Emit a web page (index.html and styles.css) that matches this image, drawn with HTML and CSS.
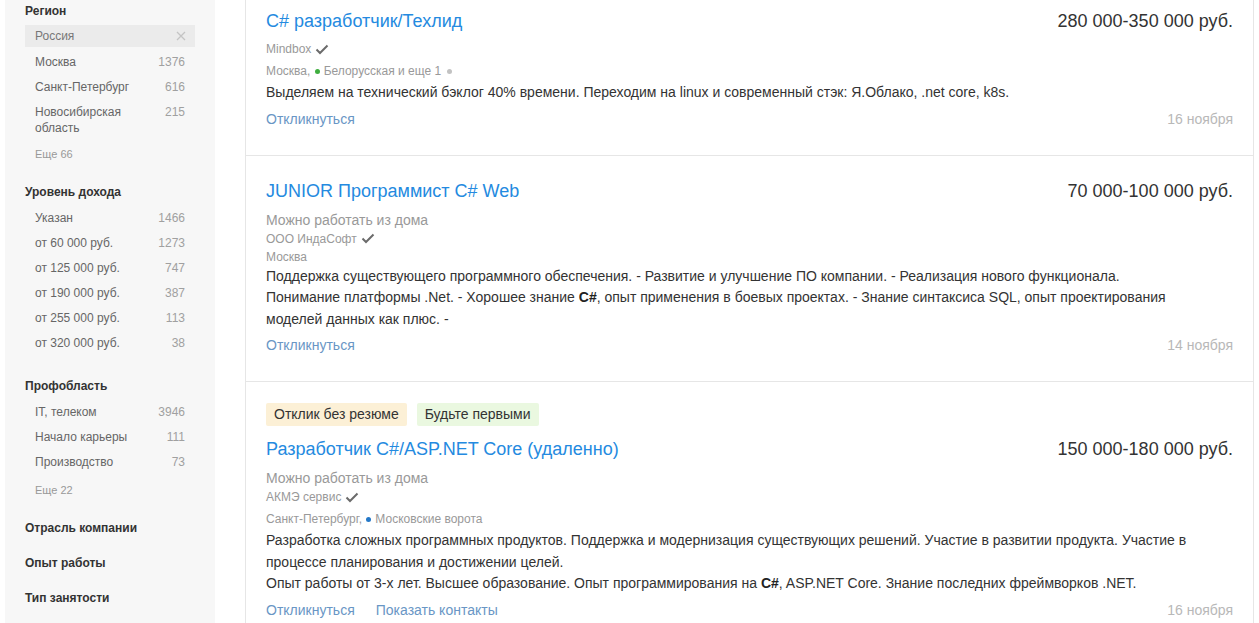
FILE: index.html
```html
<!DOCTYPE html>
<html lang="ru">
<head>
<meta charset="utf-8">
<title>Вакансии</title>
<link rel="stylesheet" href="styles.css">
</head>
<body>
<div class="page">
  <aside class="sidebar">
    <section class="group">
      <h3 class="group-title">Регион</h3>
      <ul class="items">
        <li class="item item-selected"><span class="name">Россия</span>
          <svg class="close" width="10" height="10" viewBox="0 0 10 10"><path d="M1 1L9 9M9 1L1 9" stroke="#c4c4c4" stroke-width="1.3" fill="none"/></svg>
        </li>
        <li class="item"><span class="name">Москва</span><span class="count">1376</span></li>
        <li class="item"><span class="name">Санкт-Петербург</span><span class="count">616</span></li>
        <li class="item"><span class="name">Новосибирская<br>область</span><span class="count">215</span></li>
      </ul>
      <div class="more">Еще 66</div>
    </section>
    <section class="group">
      <h3 class="group-title">Уровень дохода</h3>
      <ul class="items">
        <li class="item"><span class="name">Указан</span><span class="count">1466</span></li>
        <li class="item"><span class="name">от 60 000 руб.</span><span class="count">1273</span></li>
        <li class="item"><span class="name">от 125 000 руб.</span><span class="count">747</span></li>
        <li class="item"><span class="name">от 190 000 руб.</span><span class="count">387</span></li>
        <li class="item"><span class="name">от 255 000 руб.</span><span class="count">113</span></li>
        <li class="item"><span class="name">от 320 000 руб.</span><span class="count">38</span></li>
      </ul>
    </section>
    <section class="group">
      <h3 class="group-title">Профобласть</h3>
      <ul class="items">
        <li class="item"><span class="name">IT, телеком</span><span class="count">3946</span></li>
        <li class="item"><span class="name">Начало карьеры</span><span class="count">111</span></li>
        <li class="item"><span class="name">Производство</span><span class="count">73</span></li>
      </ul>
      <div class="more more-wide">Еще 22</div>
    </section>
    <section class="group group-collapsed"><h3 class="group-title">Отрасль компании</h3></section>
    <section class="group group-collapsed"><h3 class="group-title">Опыт работы</h3></section>
    <section class="group group-collapsed"><h3 class="group-title">Тип занятости</h3></section>
  </aside>

  <main class="results">
    <article class="card card-first">
      <div class="card-head">
        <a class="title">C# разработчик/Техлид</a>
        <span class="salary">280 000-350 000 руб.</span>
      </div>
      <div class="company">Mindbox <svg class="check" width="14" height="11" viewBox="0 0 14 11"><path d="M1.5 5.5L5 9L12.5 1.5" stroke="#6b6b6b" stroke-width="2" fill="none"/></svg></div>
      <div class="location">Москва, <span class="dot dot-green"></span>Белорусская и еще 1 <span class="dot dot-grey"></span></div>
      <p class="desc">Выделяем на технический бэклог 40% времени. Переходим на linux и современный стэк: Я.Облако, .net core, k8s.</p>
      <div class="card-foot">
        <div class="actions"><a class="action">Откликнуться</a></div>
        <span class="date">16 ноября</span>
      </div>
    </article>

    <article class="card">
      <div class="card-head">
        <a class="title">JUNIOR Программист C# Web</a>
        <span class="salary">70 000-100 000 руб.</span>
      </div>
      <div class="remote">Можно работать из дома</div>
      <div class="company">ООО ИндаСофт <svg class="check" width="14" height="11" viewBox="0 0 14 11"><path d="M1.5 5.5L5 9L12.5 1.5" stroke="#6b6b6b" stroke-width="2" fill="none"/></svg></div>
      <div class="location location-plain">Москва</div>
      <p class="desc">Поддержка существующего программного обеспечения. - Развитие и улучшение ПО компании. - Реализация нового функционала.<br>Понимание платформы .Net. - Хорошее знание <b>C#</b>, опыт применения в боевых проектах. - Знание синтаксиса SQL, опыт проектирования моделей данных как плюс. -</p>
      <div class="card-foot">
        <div class="actions"><a class="action">Откликнуться</a></div>
        <span class="date">14 ноября</span>
      </div>
    </article>

    <article class="card card-tagged">
      <div class="badges">
        <span class="badge badge-yellow">Отклик без резюме</span>
        <span class="badge badge-green">Будьте первыми</span>
      </div>
      <div class="card-head">
        <a class="title">Разработчик C#/ASP.NET Core (удаленно)</a>
        <span class="salary">150 000-180 000 руб.</span>
      </div>
      <div class="remote">Можно работать из дома</div>
      <div class="company">АКМЭ сервис <svg class="check" width="14" height="11" viewBox="0 0 14 11"><path d="M1.5 5.5L5 9L12.5 1.5" stroke="#6b6b6b" stroke-width="2" fill="none"/></svg></div>
      <div class="location">Санкт-Петербург, <span class="dot dot-blue"></span>Московские ворота</div>
      <p class="desc">Разработка сложных программных продуктов. Поддержка и модернизация существующих решений. Участие в развитии продукта. Участие в процессе планирования и достижении целей.<br>Опыт работы от 3-х лет. Высшее образование. Опыт программирования на <b>C#</b>, ASP.NET Core. Знание последних фреймворков .NET.</p>
      <div class="card-foot">
        <div class="actions"><a class="action">Откликнуться</a><a class="action">Показать контакты</a></div>
        <span class="date">16 ноября</span>
      </div>
    </article>
  </main>
</div>
</body>
</html>
```

FILE: styles.css
```css
* { box-sizing: border-box; }

html, body {
  margin: 0;
  padding: 0;
  height: 100%;
  overflow: hidden;
  background: #fff;
}

body {
  font-family: "Liberation Sans", Arial, sans-serif;
  color: #333;
}

.page {
  display: flex;
  gap: 30px;
  padding: 0 5px;
  height: 100vh;
}

/* ---------- sidebar ---------- */
.sidebar {
  width: 210px;
  flex: 0 0 210px;
  background: #f7f7f7;
  padding: 3px 20px 0 20px;
}

.group { margin-bottom: 22px; }
.group-collapsed { margin-bottom: 19px; }

.group-title {
  margin: 0;
  font-size: 12px;
  line-height: 16px;
  font-weight: bold;
  color: #333;
}

.items {
  list-style: none;
  margin: 6px 0 0;
  padding: 0;
}

.item {
  display: flex;
  justify-content: space-between;
  align-items: flex-start;
  padding: 4px 10px 5px;
  font-size: 12px;
  line-height: 16px;
  color: #666;
}

.item-selected {
  background: #ebebeb;
  padding: 3px 10px;
  margin-top: 1px;
  margin-bottom: 3px;
  align-items: center;
}

.item-selected .name { color: #777; }

.close { flex: none; margin-right: -1px; }

.count { color: #a0a0a0; }

.more {
  margin-top: 5px;
  padding-left: 10px;
  font-size: 11px;
  line-height: 16px;
  color: #999;
}

.more-wide { margin-top: 7px; }

/* ---------- results ---------- */
.results {
  flex: 1;
  border-left: 1px solid #e6e6e6;
  border-right: 1px solid #e6e6e6;
  align-self: flex-start;
}

.card {
  padding: 24px 20px 27px;
  border-bottom: 1px solid #e6e6e6;
}

.card-first { padding-top: 10px; }
.card-tagged { padding-top: 21px; }

.badges {
  display: flex;
  gap: 10px;
  margin-bottom: 12px;
}

.badge {
  font-size: 14px;
  line-height: 23px;
  padding: 0 8px;
  border-radius: 2px;
  color: #333;
}

.badge-yellow { background: #fcf0d6; }
.badge-green { background: #eaf8e0; }

.card-head {
  display: flex;
  justify-content: space-between;
  align-items: baseline;
  margin-bottom: 8px;
}

.title {
  font-size: 18px;
  line-height: 22px;
  color: #248ae0;
  text-decoration: none;
}

.salary {
  font-size: 18px;
  line-height: 22px;
  color: #333;
}

.remote {
  font-size: 14px;
  line-height: 20px;
  color: #999;
}

.company {
  display: flex;
  align-items: center;
  gap: 4px;
  font-size: 12px;
  line-height: 18px;
  color: #999;
}

.location {
  margin-top: 2px;
  font-size: 12px;
  line-height: 22px;
  color: #999;
}

.location-plain { line-height: 18px; margin-top: 0; }

.dot {
  display: inline-block;
  width: 5px;
  height: 5px;
  border-radius: 50%;
  margin: 0 4px 1px 1px;
  vertical-align: middle;
}

.dot-green { background: #3fae3f; }
.dot-grey { background: #c2c2c2; margin-left: 2px; }
.dot-blue { background: #2478c8; }

.desc {
  margin: 0;
  max-width: 940px;
  font-size: 14px;
  line-height: 21.5px;
  color: #333;
}

.desc b { color: #222; }

.card-foot {
  display: flex;
  justify-content: space-between;
  align-items: center;
  margin-top: 6px;
  font-size: 14px;
  line-height: 18px;
}

.actions {
  display: flex;
  gap: 21px;
}

.action {
  color: #6996c5;
  text-decoration: none;
}

.date { color: #b8b8b8; }
```
